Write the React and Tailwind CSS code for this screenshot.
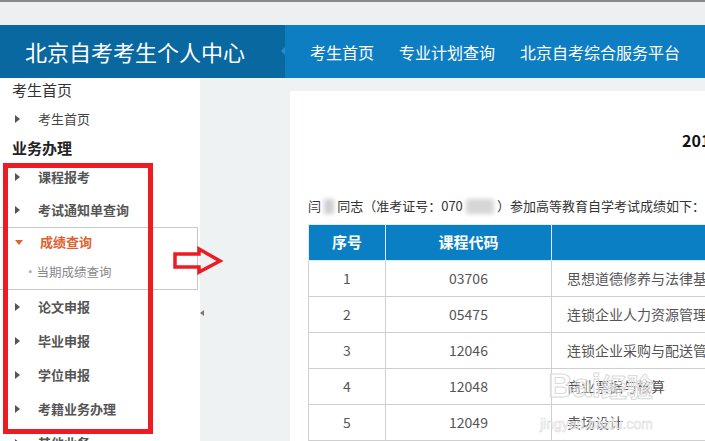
import React from "react";

const font = { fontFamily: '"Noto Sans CJK SC", "Noto Sans", sans-serif' };

const Arrow = ({ down, color = "#555" }) =>
  down ? (
    <span className="inline-block w-0 h-0 border-l-[4px] border-r-[4px] border-t-[5px] border-l-transparent border-r-transparent" style={{ borderTopColor: color }} />
  ) : (
    <span className="inline-block w-0 h-0 border-t-[4px] border-b-[4px] border-l-[5px] border-t-transparent border-b-transparent border-l-[#555]" />
  );

const SideItem = ({ label, h = "h-[34px]" }) => (
  <div className={`${h} flex items-center pl-[15px]`}>
    <Arrow />
    <span className="ml-[18px] text-[13px] font-bold text-[#555]">{label}</span>
  </div>
);

const rows = [
  ["1", "03706", "思想道德修养与法律基础"],
  ["2", "05475", "连锁企业人力资源管理"],
  ["3", "12046", "连锁企业采购与配送管理"],
  ["4", "12048", "商业票据与核算"],
  ["5", "12049", "卖场设计"],
];

export default function App() {
  return (
    <div className="relative w-[705px] h-[441px] overflow-hidden bg-white" style={font}>
      {/* top strip */}
      <div className="h-[25px] bg-[#eeeff1] border-t-2 border-[#8a8a8a]" />

      {/* header */}
      <div className="h-[53px] flex bg-[#0d7ec2]">
        <div className="relative w-[285px] bg-[#0a68a1] flex items-center pl-[25px]">
          <span className="text-[22px] text-white">北京自考考生个人中心</span>
          <span className="absolute right-0 top-[22px] w-0 h-0 border-t-[4px] border-b-[4px] border-r-[4px] border-t-transparent border-b-transparent border-r-[#2a8ccc]" />
        </div>
        <div className="flex items-center gap-[25px] pl-[25px] text-[16px] text-white">
          <span>考生首页</span>
          <span>专业计划查询</span>
          <span>北京自考综合服务平台</span>
        </div>
      </div>

      {/* body */}
      <div className="flex bg-[#eef2f2] h-[363px]">
        {/* sidebar */}
        <div className="relative w-[200px] shrink-0 bg-white">
          <div className="h-[24px] flex items-center pl-[12px] text-[15px] text-[#333]">考生首页</div>
          <div className="h-[34px] flex items-center pl-[15px]">
            <Arrow />
            <span className="ml-[18px] text-[13px] text-[#444]">考生首页</span>
          </div>
          <div className="h-[24px] flex items-center pl-[12px] text-[15px] font-bold text-[#222]">业务办理</div>
          <SideItem label="课程报考" h="h-[33px]" />
          <SideItem label="考试通知单查询" />
          <div className="w-[198px] border border-l-0 border-[#c8c8c8] bg-white">
            <div className="h-[28px] flex items-center pl-[15px]">
              <Arrow down color="#e0622c" />
              <span className="ml-[17px] text-[13px] font-bold text-[#df5f2f]">成绩查询</span>
            </div>
            <div className="h-[33px] flex items-center pl-[24px] text-[12.5px] text-[#8a8a8a]">
              <span className="text-[#aaa]">•</span>当期成绩查询
            </div>
          </div>
          <SideItem label="论文申报" />
          <SideItem label="毕业申报" />
          <SideItem label="学位申报" />
          <SideItem label="考籍业务办理" />
          <SideItem label="其他业务" />
          <span className="absolute right-[-4px] top-[232px] w-0 h-0 border-t-[3px] border-b-[3px] border-r-[4px] border-t-transparent border-b-transparent border-r-[#777]" />
        </div>

        {/* content */}
        <div className="flex-1 pl-[90px] pt-[13px] min-w-0">
          <div className="bg-white h-full overflow-hidden pl-[18px] whitespace-nowrap">
            <div className="h-[62px] flex items-end pl-[374px] pb-[1px] text-[16px] font-bold text-[#111]">2017年上半年考试成绩单</div>
            <div className="h-[28px] mt-[39px] flex items-center text-[13px] text-[#333]">
              闫<span className="inline-block w-[26px] h-[15px] bg-[#cfcfcf] blur-[2px] mx-[3px]" />同志（准考证号：070
              <span className="inline-block w-[72px] h-[15px] bg-[#d6d6d6] blur-[2px] mx-[3px]" />）参加高等教育自学考试成绩如下：
            </div>
            <table className="mt-[4px] table-fixed w-[900px] border-collapse text-[14px] text-[#555]">
              <colgroup>
                <col className="w-[77px]" />
                <col className="w-[166px]" />
                <col />
              </colgroup>
              <thead>
                <tr className="h-[36px] bg-[#0b7fc3] text-white">
                  <th className="border border-[#d8eef8] font-bold text-[15px]">序号</th>
                  <th className="border border-[#d8eef8] font-bold text-[15px]">课程代码</th>
                  <th className="border border-[#d8eef8] font-bold text-[15px]">课程名称</th>
                </tr>
              </thead>
              <tbody>
                {rows.map((r) => (
                  <tr key={r[0]} className="h-[36px]">
                    <td className="border border-[#cfcfcf] text-center">{r[0]}</td>
                    <td className="border border-[#cfcfcf] text-center">{r[1]}</td>
                    <td className="border border-[#cfcfcf] pl-[15px]">{r[2]}</td>
                  </tr>
                ))}
              </tbody>
            </table>
          </div>
        </div>
      </div>

      {/* red annotation box */}
      <div className="absolute left-[3px] top-[163px] w-[150px] h-[271px] border-[5px] border-[#ec1c24]" />

      {/* red annotation arrow */}
      <svg className="absolute left-[172px] top-[246px]" width="52" height="30" viewBox="0 0 52 30">
        <polygon points="3,8 27,8 27,3 48,15 27,26 27,21 3,21" fill="none" stroke="#ec1c24" strokeWidth="3.5" strokeLinejoin="miter" />
      </svg>

      {/* watermark */}
      <div className="absolute left-[548px] top-[368px] text-[34px] font-bold text-white/40 leading-none" style={{ WebkitTextStroke: "1px #dadada", fontFamily: '"Liberation Sans", sans-serif' }}>
        Bai<span style={{ fontFamily: '"Noto Sans CJK SC", sans-serif' }} className="text-[26px]">经验</span>
      </div>
      <div className="absolute left-[540px] top-[414px] text-[14px] text-white/40" style={{ WebkitTextStroke: "0.6px #dcdcdc", fontFamily: '"Liberation Sans", sans-serif' }}>
        jingyan.baidu.com
      </div>
    </div>
  );
}
